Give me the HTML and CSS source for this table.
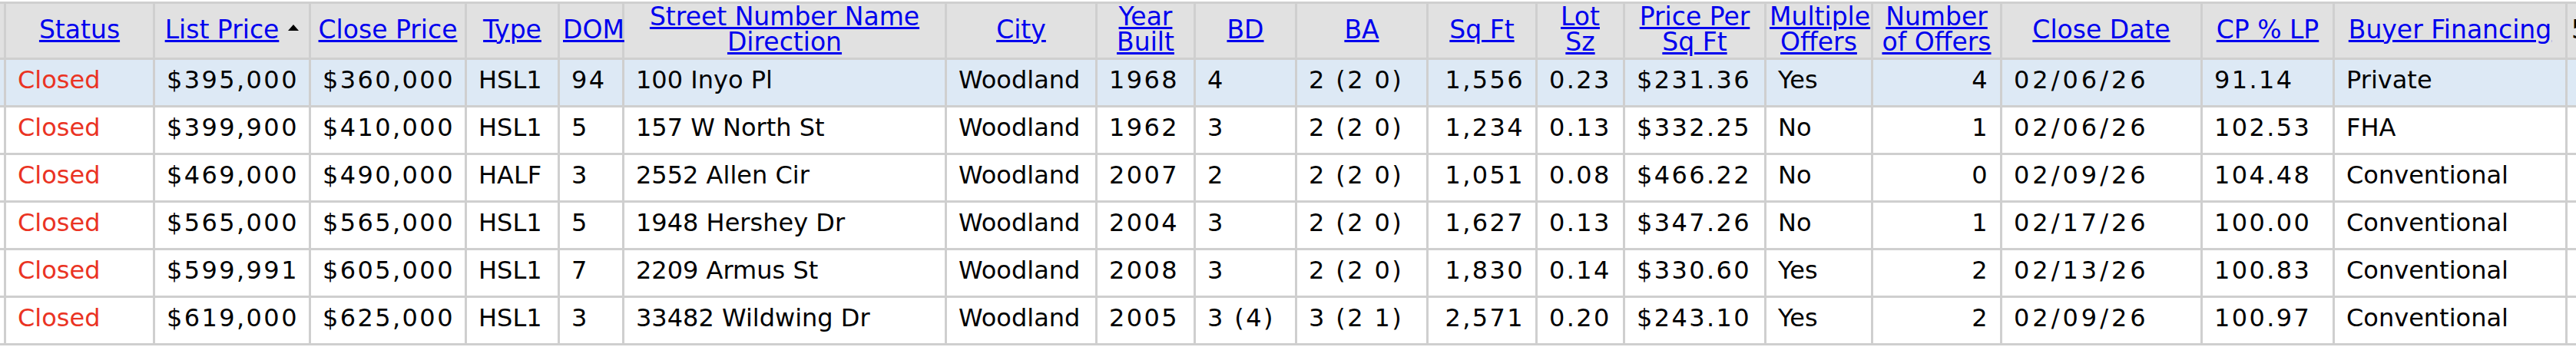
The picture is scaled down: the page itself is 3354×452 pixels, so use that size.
FILE: index.html
```html
<!DOCTYPE html>
<html lang="en">
    <head>
        <meta charset="UTF-8" />
        <meta name="viewport" content="width=device-width, initial-scale=1.0" />
        <title>Closed Listings</title>
        <link rel="stylesheet" href="styles.css">
    </head>
    <body>
        <div class="results">
            <table class="grid">
                <thead>
                    <tr>
                        <th class="w-edge"></th>
                        <th class="w-status"><a href="#">Status</a></th>
                        <th class="w-list"><a href="#">List Price</a><span class="sort"></span></th>
                        <th class="w-close"><a href="#">Close Price</a></th>
                        <th class="w-type"><a href="#">Type</a></th>
                        <th class="w-dom"><a href="#">DOM</a></th>
                        <th class="w-street"><a href="#">Street Number Name<br>Direction</a></th>
                        <th class="w-city"><a href="#">City</a></th>
                        <th class="w-year"><a href="#">Year<br>Built</a></th>
                        <th class="w-bd"><a href="#">BD</a></th>
                        <th class="w-ba"><a href="#">BA</a></th>
                        <th class="w-sqft"><a href="#">Sq Ft</a></th>
                        <th class="w-lot"><a href="#">Lot<br>Sz</a></th>
                        <th class="w-ppsf"><a href="#">Price Per<br>Sq Ft</a></th>
                        <th class="w-multi"><a href="#">Multiple<br>Offers</a></th>
                        <th class="w-count"><a href="#">Number<br>of Offers</a></th>
                        <th class="w-date"><a href="#">Close Date</a></th>
                        <th class="w-cp"><a href="#">CP % LP</a></th>
                        <th class="w-fin"><a href="#">Buyer Financing</a></th>
                        <th class="w-more">5</th>
                    </tr>
                </thead>
                <tbody>
                    <tr class="selected">
                        <td></td>
                        <td class="status">Closed</td>
                        <td class="num">$395,000</td>
                        <td class="num">$360,000</td>
                        <td>HSL1</td>
                        <td class="num">94</td>
                        <td>100 Inyo Pl</td>
                        <td>Woodland</td>
                        <td class="num">1968</td>
                        <td class="num">4</td>
                        <td class="num">2 (2 0)</td>
                        <td class="num right">1,556</td>
                        <td class="num">0.23</td>
                        <td class="num">$231.36</td>
                        <td>Yes</td>
                        <td class="num right">4</td>
                        <td class="date">02/06/26</td>
                        <td class="num">91.14</td>
                        <td>Private</td>
                        <td></td>
                    </tr>
                    <tr>
                        <td></td>
                        <td class="status">Closed</td>
                        <td class="num">$399,900</td>
                        <td class="num">$410,000</td>
                        <td>HSL1</td>
                        <td class="num">5</td>
                        <td>157 W North St</td>
                        <td>Woodland</td>
                        <td class="num">1962</td>
                        <td class="num">3</td>
                        <td class="num">2 (2 0)</td>
                        <td class="num right">1,234</td>
                        <td class="num">0.13</td>
                        <td class="num">$332.25</td>
                        <td>No</td>
                        <td class="num right">1</td>
                        <td class="date">02/06/26</td>
                        <td class="num">102.53</td>
                        <td>FHA</td>
                        <td></td>
                    </tr>
                    <tr>
                        <td></td>
                        <td class="status">Closed</td>
                        <td class="num">$469,000</td>
                        <td class="num">$490,000</td>
                        <td>HALF</td>
                        <td class="num">3</td>
                        <td>2552 Allen Cir</td>
                        <td>Woodland</td>
                        <td class="num">2007</td>
                        <td class="num">2</td>
                        <td class="num">2 (2 0)</td>
                        <td class="num right">1,051</td>
                        <td class="num">0.08</td>
                        <td class="num">$466.22</td>
                        <td>No</td>
                        <td class="num right">0</td>
                        <td class="date">02/09/26</td>
                        <td class="num">104.48</td>
                        <td>Conventional</td>
                        <td></td>
                    </tr>
                    <tr>
                        <td></td>
                        <td class="status">Closed</td>
                        <td class="num">$565,000</td>
                        <td class="num">$565,000</td>
                        <td>HSL1</td>
                        <td class="num">5</td>
                        <td>1948 Hershey Dr</td>
                        <td>Woodland</td>
                        <td class="num">2004</td>
                        <td class="num">3</td>
                        <td class="num">2 (2 0)</td>
                        <td class="num right">1,627</td>
                        <td class="num">0.13</td>
                        <td class="num">$347.26</td>
                        <td>No</td>
                        <td class="num right">1</td>
                        <td class="date">02/17/26</td>
                        <td class="num">100.00</td>
                        <td>Conventional</td>
                        <td></td>
                    </tr>
                    <tr>
                        <td></td>
                        <td class="status">Closed</td>
                        <td class="num">$599,991</td>
                        <td class="num">$605,000</td>
                        <td>HSL1</td>
                        <td class="num">7</td>
                        <td>2209 Armus St</td>
                        <td>Woodland</td>
                        <td class="num">2008</td>
                        <td class="num">3</td>
                        <td class="num">2 (2 0)</td>
                        <td class="num right">1,830</td>
                        <td class="num">0.14</td>
                        <td class="num">$330.60</td>
                        <td>Yes</td>
                        <td class="num right">2</td>
                        <td class="date">02/13/26</td>
                        <td class="num">100.83</td>
                        <td>Conventional</td>
                        <td></td>
                    </tr>
                    <tr>
                        <td></td>
                        <td class="status">Closed</td>
                        <td class="num">$619,000</td>
                        <td class="num">$625,000</td>
                        <td>HSL1</td>
                        <td class="num">3</td>
                        <td>33482 Wildwing Dr</td>
                        <td>Woodland</td>
                        <td class="num">2005</td>
                        <td class="num">3 (4)</td>
                        <td class="num">3 (2 1)</td>
                        <td class="num right">2,571</td>
                        <td class="num">0.20</td>
                        <td class="num">$243.10</td>
                        <td>Yes</td>
                        <td class="num right">2</td>
                        <td class="date">02/09/26</td>
                        <td class="num">100.97</td>
                        <td>Conventional</td>
                        <td></td>
                    </tr>
                </tbody>
            </table>
        </div>
    </body>
</html>
```

FILE: styles.css
```css
body {
    margin: 0;
    background: #fff;
    font-family: "DejaVu Sans", "Liberation Sans", sans-serif;
    color: #000;
}

.results {
    overflow: hidden;
    padding-top: 2px;
}

.grid {
    table-layout: fixed;
    width: 3600px;
    margin-left: -38px;
    border-spacing: 3px;
    background: #cfcfcf;
}

.grid th {
    height: 70px;
    padding: 0 4px 4px;
    box-sizing: border-box;
    background: #e1e1e1;
    font-size: 33px;
    line-height: 33px;
    font-weight: normal;
    text-align: center;
    white-space: nowrap;
}

.grid th a {
    color: #0000ee;
    text-decoration-thickness: 3px;
    text-underline-offset: 2px;
}

.sort {
    display: inline-block;
    margin-left: 12px;
    border-left: 7px solid transparent;
    border-right: 7px solid transparent;
    border-bottom: 8px solid #000;
    vertical-align: 0.3em;
}

.grid td {
    height: 59px;
    padding: 0 14px 7px 15px;
    box-sizing: border-box;
    background: #fff;
    font-size: 32px;
    line-height: 36px;
    white-space: nowrap;
    overflow: hidden;
}

.grid tr.selected td {
    background: #dde9f5;
}

.status {
    color: #ea3323;
}

.num {
    letter-spacing: 2.4px;
}

.date {
    letter-spacing: 4px;
}

.right {
    text-align: right;
}

.w-edge { width: 40px; }
.w-status { width: 191px; }
.w-list { width: 200px; }
.w-close { width: 200px; }
.w-type { width: 118px; }
.w-dom { width: 81px; }
.w-street { width: 417px; }
.w-city { width: 193px; }
.w-year { width: 125px; }
.w-bd { width: 129px; }
.w-ba { width: 168px; }
.w-sqft { width: 139px; }
.w-lot { width: 111px; }
.w-ppsf { width: 181px; }
.w-multi { width: 136px; }
.w-count { width: 165px; }
.w-date { width: 258px; }
.w-cp { width: 169px; }
.w-fin { width: 300px; }

.grid th.w-more {
    text-align: left;
    padding-left: 5px;
    color: #000;
}
```
